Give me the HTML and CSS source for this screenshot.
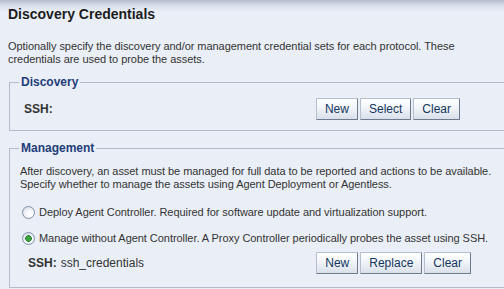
FILE: index.html
```html
<!DOCTYPE html>
<html lang="en">
  <head>
    <meta charset="UTF-8" />
    <title>Discovery Credentials</title>
    <link rel="stylesheet" href="styles.css">
  </head>
  <body>
    <div class="page">
      <h1 class="page-title">Discovery Credentials</h1>
      <p class="intro">
        Optionally specify the discovery and/or management credential sets for each protocol. These<br>
        credentials are used to probe the assets.
      </p>

      <fieldset class="group">
        <legend>Discovery</legend>
        <div class="cred-row cred-discovery">
          <span class="cred-label">SSH:</span>
          <div class="btn-set">
            <button class="btn">New</button>
            <button class="btn">Select</button>
            <button class="btn">Clear</button>
          </div>
        </div>
      </fieldset>

      <fieldset class="group group-mgmt">
        <legend>Management</legend>
        <p class="note">
          After discovery, an asset must be managed for full data to be reported and actions to be available.<br>
          Specify whether to manage the assets using Agent Deployment or Agentless.
        </p>
        <label class="choice">
          <input type="radio" name="mode" class="radio" />
          Deploy Agent Controller. Required for software update and virtualization support.
        </label>
        <label class="choice">
          <input type="radio" name="mode" class="radio" checked />
          Manage without Agent Controller. A Proxy Controller periodically probes the asset using SSH.
        </label>
        <div class="cred-row cred-mgmt">
          <span class="cred-label">SSH:<span class="cred-value">ssh_credentials</span></span>
          <div class="btn-set">
            <button class="btn">New</button>
            <button class="btn">Replace</button>
            <button class="btn">Clear</button>
          </div>
        </div>
      </fieldset>
    </div>
  </body>
</html>
```

FILE: styles.css
```css
* {
  box-sizing: border-box;
}

body {
  margin: 0;
  overflow: hidden;
  background: linear-gradient(#b3bacb 0, #d7dde9 5px, #eaeff7 12px) no-repeat top / 100% 14px,
    #eaeff7;
  font-family: "Liberation Sans", Arial, sans-serif;
  font-size: 11px;
  letter-spacing: -0.05px;
  color: #333;
}

.page {
  padding: 0 0 0 8px;
  margin-right: -3px;
}

.page-title {
  margin: 0;
  padding-top: 6px;
  font-size: 14px;
  line-height: 16px;
  font-weight: bold;
  letter-spacing: 0;
  color: #1c1c1c;
}

.intro {
  margin: 18px 0 0;
  line-height: 13px;
}

.group {
  margin: 9px 0 0 1px;
  padding: 0 0 10px 10px;
  border: 1px solid #b4bbcb;
}

.group-mgmt {
  margin-top: 10px;
  padding-bottom: 13px;
}

.group legend {
  margin-left: -1px;
  padding: 0 2px;
  font-size: 12px;
  line-height: 14px;
  font-weight: bold;
  letter-spacing: 0;
  color: #1f3d7a;
}

.cred-row {
  display: flex;
  align-items: center;
  justify-content: space-between;
}

.cred-discovery {
  margin-top: 9px;
  padding-left: 4px;
  padding-right: 46px;
}

.cred-mgmt {
  margin-top: 7px;
  padding-left: 8px;
  padding-right: 35px;
}

.cred-label {
  font-size: 12px;
  font-weight: bold;
  letter-spacing: 0;
  color: #333;
}

.cred-value {
  margin-left: 4px;
  font-weight: normal;
}

.btn-set {
  display: flex;
  gap: 2px;
}

.btn {
  height: 22px;
  padding: 0 8px;
  font-family: "Liberation Sans", Arial, sans-serif;
  font-size: 12px;
  color: #13365e;
  background: linear-gradient(#ffffff, #f3f6fa 40%, #d9e0ea);
  border: 1px solid #b5bfcd;
  border-right-color: #6e7a8e;
  border-bottom-color: #6e7a8e;
  border-radius: 1px;
}

.note {
  margin: 10px 0 0;
  line-height: 13px;
  white-space: nowrap;
}

.choice {
  display: flex;
  align-items: center;
  gap: 4px;
  height: 14px;
  margin-top: 14px;
  padding-left: 2px;
  white-space: nowrap;
}

.choice + .choice {
  margin-top: 12px;
}

.radio {
  appearance: none;
  width: 13px;
  height: 13px;
  margin: 0;
  border: 1px solid #7f90aa;
  border-radius: 50%;
  background: radial-gradient(circle at 60% 65%, #ffffff 0, #f4f6f9 40%, #cfd7e3 100%);
}

.radio:checked {
  background: radial-gradient(circle, #2e9a34 0, #3fb043 2px, #1f6f25 3px, transparent 3.5px),
    radial-gradient(circle at 60% 65%, #ffffff 0, #f4f6f9 40%, #cfd7e3 100%);
}
```
